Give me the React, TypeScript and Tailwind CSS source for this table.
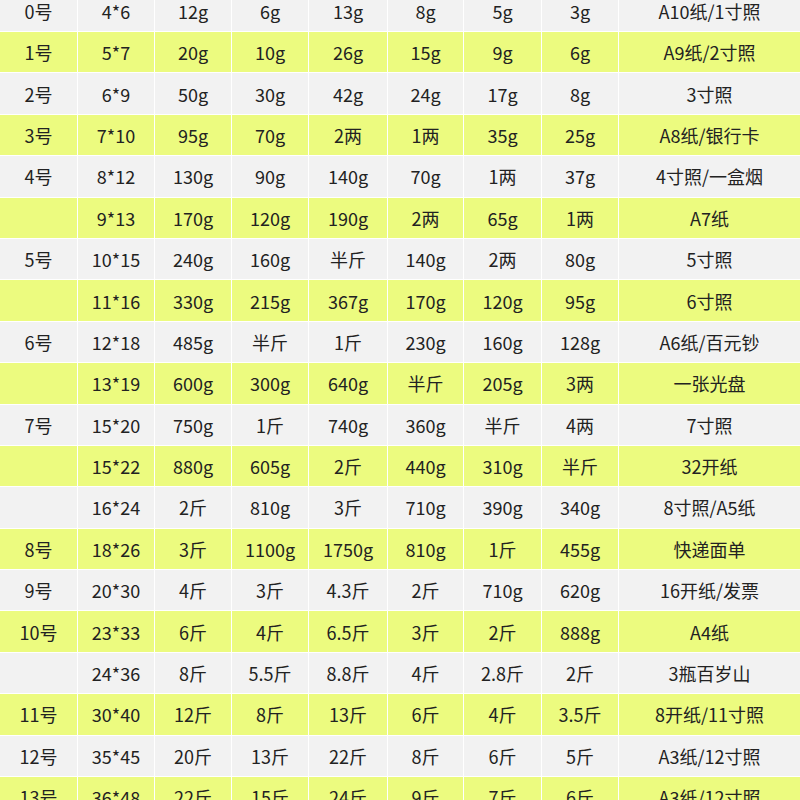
import React from "react";

const rows: string[][] = [
  ["0号", "4*6", "12g", "6g", "13g", "8g", "5g", "3g", "A10纸/1寸照"],
  ["1号", "5*7", "20g", "10g", "26g", "15g", "9g", "6g", "A9纸/2寸照"],
  ["2号", "6*9", "50g", "30g", "42g", "24g", "17g", "8g", "3寸照"],
  ["3号", "7*10", "95g", "70g", "2两", "1两", "35g", "25g", "A8纸/银行卡"],
  ["4号", "8*12", "130g", "90g", "140g", "70g", "1两", "37g", "4寸照/一盒烟"],
  ["", "9*13", "170g", "120g", "190g", "2两", "65g", "1两", "A7纸"],
  ["5号", "10*15", "240g", "160g", "半斤", "140g", "2两", "80g", "5寸照"],
  ["", "11*16", "330g", "215g", "367g", "170g", "120g", "95g", "6寸照"],
  ["6号", "12*18", "485g", "半斤", "1斤", "230g", "160g", "128g", "A6纸/百元钞"],
  ["", "13*19", "600g", "300g", "640g", "半斤", "205g", "3两", "一张光盘"],
  ["7号", "15*20", "750g", "1斤", "740g", "360g", "半斤", "4两", "7寸照"],
  ["", "15*22", "880g", "605g", "2斤", "440g", "310g", "半斤", "32开纸"],
  ["", "16*24", "2斤", "810g", "3斤", "710g", "390g", "340g", "8寸照/A5纸"],
  ["8号", "18*26", "3斤", "1100g", "1750g", "810g", "1斤", "455g", "快递面单"],
  ["9号", "20*30", "4斤", "3斤", "4.3斤", "2斤", "710g", "620g", "16开纸/发票"],
  ["10号", "23*33", "6斤", "4斤", "6.5斤", "3斤", "2斤", "888g", "A4纸"],
  ["", "24*36", "8斤", "5.5斤", "8.8斤", "4斤", "2.8斤", "2斤", "3瓶百岁山"],
  ["11号", "30*40", "12斤", "8斤", "13斤", "6斤", "4斤", "3.5斤", "8开纸/11寸照"],
  ["12号", "35*45", "20斤", "13斤", "22斤", "8斤", "6斤", "5斤", "A3纸/12寸照"],
  ["13号", "36*48", "22斤", "15斤", "24斤", "9斤", "7斤", "6斤", "A3纸/12寸照"],
];

export default function App() {
  return (
    <div className="h-[800px] w-[800px] overflow-hidden bg-white">
      <div
        className="mt-[-9.4px] grid grid-cols-[77px_76px_76px_76px_78px_75px_77px_76px_1fr] gap-[1px] bg-white text-[18px] text-[#222]"
        style={{ fontFamily: '"Noto Sans CJK SC", "Noto Sans", sans-serif' }}
      >
        {rows.map((r, i) =>
          r.map((c, j) => (
            <div
              key={`${i}-${j}`}
              className={`flex h-[40.4px] items-center justify-center leading-none ${
                i % 2 === 0 ? "bg-[#f2f2f2]" : "bg-[#ecfb7f]"
              }`}
            >
              {c}
            </div>
          ))
        )}
      </div>
    </div>
  );
}
